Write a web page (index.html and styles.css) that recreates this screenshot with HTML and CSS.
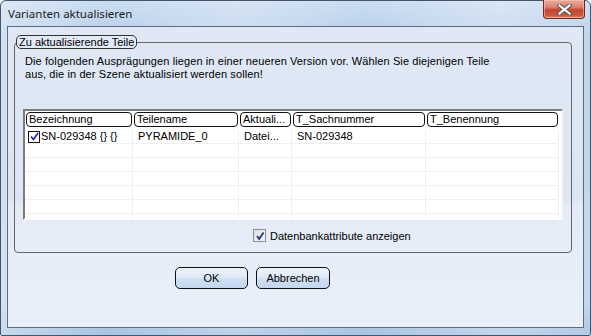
FILE: index.html
```html
<!DOCTYPE html>
<html lang="de">
<head>
  <meta charset="utf-8">
  <title>Varianten aktualisieren</title>
  <link rel="stylesheet" href="styles.css">
</head>
<body>
  <div class="window">
    <div class="titlebar">
      <span class="title">Varianten aktualisieren</span>
      <button class="close" aria-label="Schließen">
        <svg width="15" height="11" viewBox="0 0 15 11">
          <path d="M2.5 1.5 L12.5 9.5 M12.5 1.5 L2.5 9.5" stroke="#555" stroke-width="4.2" stroke-linecap="square"/>
          <path d="M2.5 1.5 L12.5 9.5 M12.5 1.5 L2.5 9.5" stroke="#fff" stroke-width="2.2" stroke-linecap="square"/>
        </svg>
      </button>
    </div>

    <div class="client">
      <fieldset class="group">
        <legend>Zu aktualisierende Teile</legend>
        <p class="intro">Die folgenden Ausprägungen liegen in einer neueren Version vor. Wählen Sie diejenigen Teile<br>aus, die in der Szene aktualisiert werden sollen!</p>

        <div class="list">
          <div class="list-head">
            <span class="head-cell">Bezeichnung</span>
            <span class="head-cell">Teilename</span>
            <span class="head-cell">Aktuali...</span>
            <span class="head-cell">T_Sachnummer</span>
            <span class="head-cell">T_Benennung</span>
          </div>
          <div class="list-rows">
            <div class="row">
              <span class="cell first"><span class="row-check"><svg width="9" height="9" viewBox="0 0 9 9"><path d="M1 4.5 L3.5 7.5 L8 1" fill="none" stroke="#1d1dc4" stroke-width="1.6"/></svg></span>SN-029348 {} {}</span>
              <span class="cell">PYRAMIDE_0</span>
              <span class="cell">Datei...</span>
              <span class="cell">SN-029348</span>
              <span class="cell"></span>
            </div>
            <div class="row"><span class="cell"></span><span class="cell"></span><span class="cell"></span><span class="cell"></span><span class="cell"></span></div>
            <div class="row"><span class="cell"></span><span class="cell"></span><span class="cell"></span><span class="cell"></span><span class="cell"></span></div>
            <div class="row"><span class="cell"></span><span class="cell"></span><span class="cell"></span><span class="cell"></span><span class="cell"></span></div>
            <div class="row"><span class="cell"></span><span class="cell"></span><span class="cell"></span><span class="cell"></span><span class="cell"></span></div>
            <div class="row"><span class="cell"></span><span class="cell"></span><span class="cell"></span><span class="cell"></span><span class="cell"></span></div>
            <div class="row"><span class="cell"></span><span class="cell"></span><span class="cell"></span><span class="cell"></span><span class="cell"></span></div>
          </div>
        </div>

        <label class="db-option">
          <span class="box"><svg width="10" height="10" viewBox="0 0 10 10"><path d="M2 5 L4.2 8 L8.5 1.5" fill="none" stroke="#202a8c" stroke-width="1.7"/></svg></span>
          Datenbankattribute anzeigen
        </label>
      </fieldset>

      <div class="buttons">
        <button class="btn">OK</button>
        <button class="btn">Abbrechen</button>
      </div>
    </div>
  </div>
</body>
</html>
```

FILE: styles.css
```css
:root {
  --frame-edge: #46566a;
  --client-edge: #5d6b7b;
  --ui-font: 'Liberation Sans', Arial, sans-serif;
}

body {
  margin: 0;
  padding: 0;
  font-family: var(--ui-font);
  font-size: 11px;
  color: #000;
  background: #fff;
}

.window {
  width: 591px;
  height: 336px;
  box-sizing: border-box;
  border: 1px solid var(--frame-edge);
  border-radius: 6px 6px 2px 2px;
  padding: 0 6px 7px 6px;
  display: flex;
  flex-direction: column;
  background:
    linear-gradient(90deg, rgba(255,255,255,0.35) 0%, rgba(255,255,255,0) 18%, rgba(255,255,255,0.25) 40%, rgba(255,255,255,0) 62%, rgba(255,255,255,0.3) 85%, rgba(255,255,255,0.1) 100%),
    linear-gradient(180deg, #c9dcf1 0%, #b9d0ea 10%, #bcd3ec 90%, #a7c3e4 100%);
}

.titlebar {
  height: 25px;
  display: flex;
  align-items: flex-start;
  justify-content: space-between;
}

.title {
  font-family: 'Noto Sans', 'Open Sans', sans-serif;
  font-size: 11.5px;
  color: #1b1b1b;
  margin-top: 5px;
  margin-left: 1px;
}

.close {
  width: 42px;
  height: 19px;
  margin: -1px -1px 0 0;
  padding: 0;
  border: 1px solid #6b2a20;
  border-top: none;
  border-radius: 0 0 4px 4px;
  background: linear-gradient(180deg, #e9a99c 0%, #d98373 40%, #c7432e 55%, #cd5640 85%, #e08b73 100%);
  box-shadow: inset 0 0 0 1px rgba(255, 210, 200, 0.5);
  display: flex;
  align-items: center;
  justify-content: center;
}

.client {
  flex: 1;
  border: 1px solid var(--client-edge);
  background: linear-gradient(180deg, #dfe8f4 0%, #dce6f3 58%, #e4ebf7 60%, #eaf0f9 100%);
  display: flex;
  flex-direction: column;
}

.group {
  margin: 8px 11px 0 6px;
  padding: 0 0 10px 0;
  border: 1px solid #666;
  border-radius: 4px;
  min-width: 0;
}

.group legend {
  margin-left: 1px;
  padding: 0 2px;
  border: 1px solid #333;
  border-radius: 5px;
  background: #e2eaf6;
  line-height: 12px;
  font-size: 11px;
}

.intro {
  margin: 6px 0 0 10px;
  line-height: 13px;
  letter-spacing: 0.1px;
}

.list {
  margin: 28px 8px 0 8px;
  height: 111px;
  box-sizing: border-box;
  border: 2px solid;
  border-color: #7b7b7b #f4f4f4 #fdfdfd #7b7b7b;
  background: #fff;
  overflow: hidden;
  padding-top: 1px;
}

.list-head,
.row {
  display: grid;
  grid-template-columns: 108px 106px 53px 134px 133px;
}

.list-head {
  height: 15px;
  margin-bottom: 3px;
}

.head-cell {
  margin: 0 1px 0 1px;
  border: 1px solid #111;
  border-radius: 4px;
  padding: 0 2px;
  line-height: 13px;
  white-space: nowrap;
  overflow: hidden;
}

.row {
  height: 14px;
}

.cell {
  border-right: 1px solid #efefef;
  border-bottom: 1px solid #efefef;
  padding-left: 5px;
  line-height: 13px;
  white-space: nowrap;
  overflow: hidden;
}

.cell.first {
  padding-left: 3px;
  display: flex;
  align-items: center;
}

.row-check {
  width: 10px;
  height: 10px;
  border: 1px solid #111;
  background: #fff;
  margin-right: 1px;
  display: flex;
  align-items: center;
  justify-content: center;
}

.db-option {
  display: flex;
  align-items: center;
  margin: 9px 0 0 238px;
}

.db-option .box {
  width: 11px;
  height: 11px;
  border: 1px solid #8e8f8f;
  background: linear-gradient(135deg, #dcdcdc, #f7f7f7);
  margin-right: 4px;
  display: flex;
  align-items: center;
  justify-content: center;
}

.buttons {
  display: flex;
  gap: 8px;
  margin: 14px 0 0 167px;
}

.btn {
  width: 73px;
  height: 22px;
  padding: 0;
  font-family: var(--ui-font);
  font-size: 11px;
  color: #000;
  border: 1px solid #111;
  border-radius: 5px;
  background: linear-gradient(180deg, #edf3fb 0%, #e0eaf7 45%, #cfdff2 55%, #c3d6ee 100%);
}

.btn + .btn {
  width: 74px;
}
```
